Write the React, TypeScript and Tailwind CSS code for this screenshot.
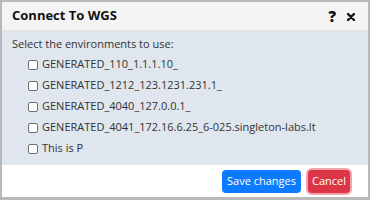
import React from "react";

const items = [
  "GENERATED_110_1.1.1.10_",
  "GENERATED_1212_123.1231.231.1_",
  "GENERATED_4040_127.0.0.1_",
  "GENERATED_4041_172.16.6.25_6-025.singleton-labs.lt",
  "This is P",
];

export default function App() {
  return (
    <div className="w-[370px] h-[200px] bg-[#b9b9b9] p-[2px] pb-[3px]" style={{ fontFamily: '"Open Sans", sans-serif' }}>
      <div className="flex flex-col h-full bg-white">
        <div className="h-[29px] flex items-center justify-between bg-[#f4f4f4] border-b border-[#e2e2e2] pl-[10px] pr-[13px]">
          <span className="text-[13px] font-bold text-[#111]">Connect To WGS</span>
          <div className="flex items-center gap-[11px] text-[#111]">
            <span className="text-[15px] font-extrabold leading-none">?</span>
            <svg width="8" height="8" viewBox="0 0 8 8" className="mt-[1px]">
              <path d="M1 1 L7 7 M7 1 L1 7" stroke="#111" strokeWidth="2.4" strokeLinecap="round" />
            </svg>
          </div>
        </div>
        <div className="h-[134px] bg-[#dfe6ee] pl-[10px] pt-[5px]">
          <div className="text-[11px] text-[#333] leading-[15px]">Select the environments to use:</div>
          <div className="flex flex-col pl-[16px] pt-[3px]">
            {items.map((t) => (
              <label key={t} className="flex items-center h-[21px] gap-[4px]">
                <span className="w-[10px] h-[10px] rounded-[2px] border border-[#6f6f6f] bg-white" />
                <span className="text-[11px] text-[#333]">{t}</span>
              </label>
            ))}
          </div>
        </div>
        <div className="flex-1 flex items-center justify-end gap-[7px] pr-[18px]">
          <button className="h-[23px] px-[5px] rounded-[4px] bg-[#0d7bff] text-white text-[11px]">Save changes</button>
          <button className="h-[23px] px-[4px] rounded-[4px] bg-[#dc3545] text-white text-[11px] ring-2 ring-[#f1a4ad]">Cancel</button>
        </div>
      </div>
    </div>
  );
}
